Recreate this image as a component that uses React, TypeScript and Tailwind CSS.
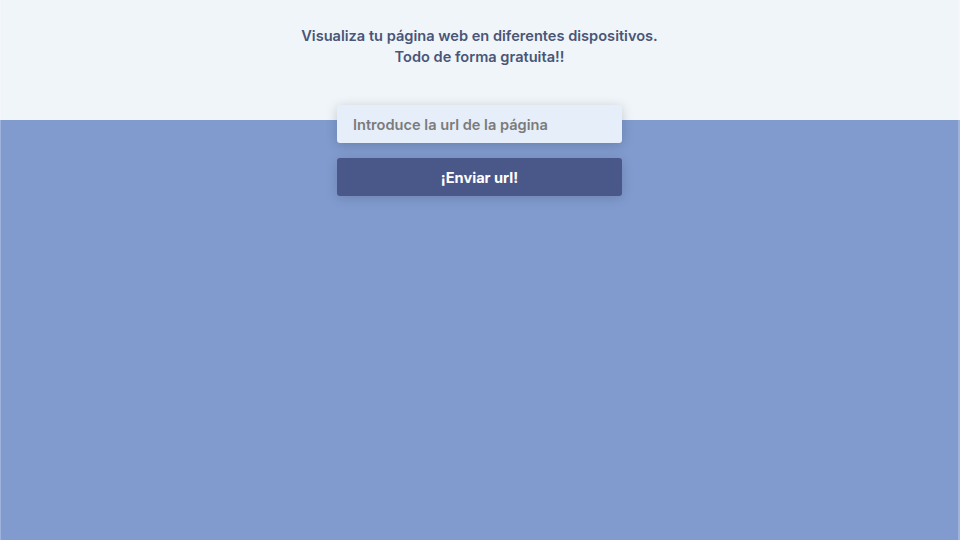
export default function App() {
  return (
    <div className="flex h-[540px] w-[960px] flex-col overflow-hidden font-['Inter',sans-serif]">
      <header className="h-[120px] shrink-0 border-r-2 border-l border-[#f3f7fb] bg-[#f0f5fa] pt-[26px] text-center">
        <p className="text-[14.6px] leading-[21px] font-semibold text-[#4a5577]">
          Visualiza tu página web en diferentes dispositivos.
        </p>
        <p className="text-[14.6px] leading-[21px] font-semibold text-[#4a5577]">
          Todo de forma gratuita!!
        </p>
      </header>
      <main className="flex flex-1 flex-col items-center border-r-2 border-l border-[#9fb3dd] bg-[#819bcf]">
        <form
          className="-mt-[15px] flex w-[285px] flex-col gap-[15px]"
          onSubmit={(e) => e.preventDefault()}
        >
          <input
            type="text"
            placeholder="Introduce la url de la página"
            className="h-[38px] w-full rounded-[3px] bg-[#e6eef9] px-[16px] pt-[2px] text-[14.6px] font-semibold text-[#555] shadow-[0_2px_12px_rgba(0,0,0,0.18)] outline-none placeholder:text-[#7b7b7b]"
          />
          <button
            type="submit"
            className="h-[38px] w-full rounded-[3px] bg-[#4a5889] pt-[3px] text-[14.6px] font-bold text-white shadow-[0_2px_12px_rgba(0,0,0,0.15)]"
          >
            ¡Enviar url!
          </button>
        </form>
      </main>
    </div>
  );
}
